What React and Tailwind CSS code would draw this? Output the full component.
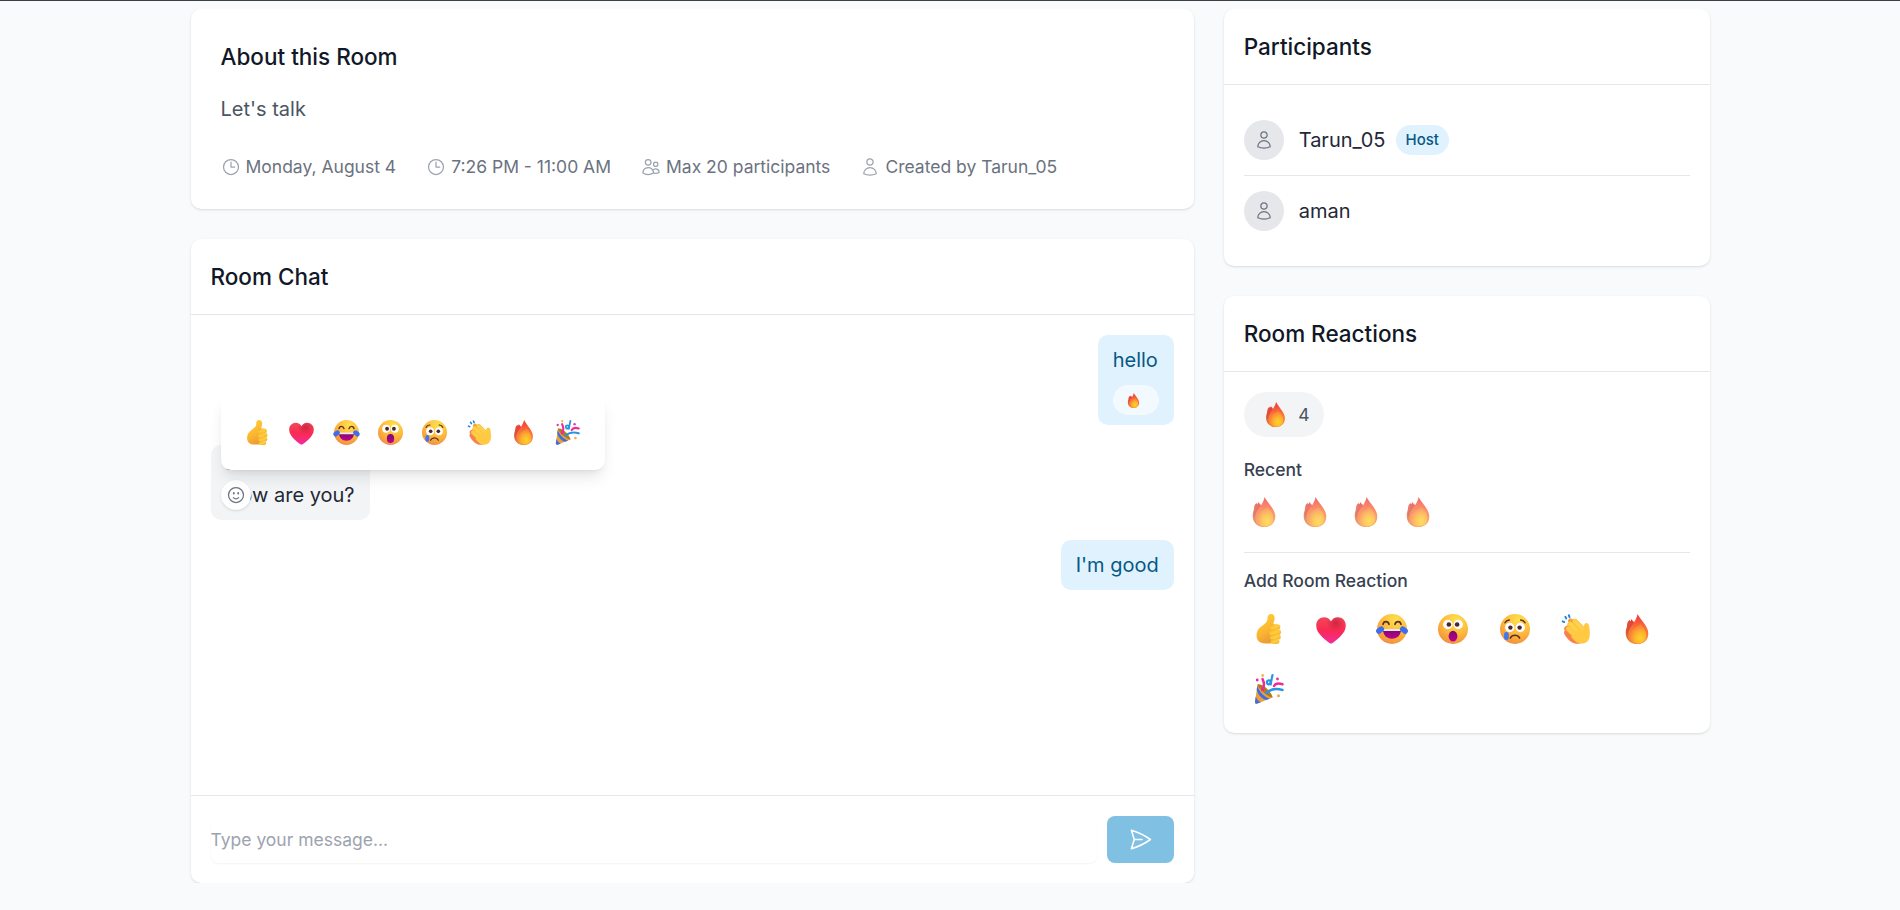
import React from "react";
import {
  HiOutlineClock,
  HiOutlineFaceSmile,
  HiOutlinePaperAirplane,
  HiOutlineUser,
  HiOutlineUsers,
} from "react-icons/hi2";

function Gradients() {
  return (
    <svg className="absolute h-0 w-0" aria-hidden="true">
      <defs>
        <radialGradient id="face" cx="0.62" cy="0.2" r="0.95">
          <stop offset="0" stopColor="#ffe04d" />
          <stop offset="0.5" stopColor="#fdb93c" />
          <stop offset="0.8" stopColor="#f4983d" />
          <stop offset="1" stopColor="#e86a80" />
        </radialGradient>
        <linearGradient id="hand" x1="0.2" y1="0" x2="0.6" y2="1">
          <stop offset="0" stopColor="#ffd233" />
          <stop offset="0.6" stopColor="#fbb531" />
          <stop offset="1" stopColor="#e99a35" />
        </linearGradient>
        <linearGradient id="finger" x1="0" y1="0" x2="1" y2="1">
          <stop offset="0" stopColor="#f2a92e" />
          <stop offset="0.5" stopColor="#ffcf3a" />
          <stop offset="1" stopColor="#f3a93a" />
        </linearGradient>
        <linearGradient id="heart" x1="0.5" y1="0" x2="0.45" y2="1">
          <stop offset="0" stopColor="#f2485a" />
          <stop offset="0.5" stopColor="#f92a52" />
          <stop offset="1" stopColor="#f22ba0" />
        </linearGradient>
        <radialGradient id="heartShade" cx="0.66" cy="0.22" r="0.32">
          <stop offset="0" stopColor="#c81f3e" stopOpacity="0.8" />
          <stop offset="1" stopColor="#c81f3e" stopOpacity="0" />
        </radialGradient>
        <linearGradient id="mouth" x1="0" y1="0" x2="0" y2="1">
          <stop offset="0" stopColor="#7a0a6e" />
          <stop offset="1" stopColor="#c0008f" />
        </linearGradient>
        <linearGradient id="flameBack" x1="0.6" y1="0" x2="0.3" y2="1">
          <stop offset="0" stopColor="#f5383b" />
          <stop offset="0.5" stopColor="#e0563a" />
          <stop offset="1" stopColor="#e07a3c" />
        </linearGradient>
        <linearGradient id="flameFront" x1="0.55" y1="0" x2="0.5" y2="1">
          <stop offset="0" stopColor="#f2363c" />
          <stop offset="0.45" stopColor="#fb6f38" />
          <stop offset="1" stopColor="#fb8f36" />
        </linearGradient>
        <radialGradient id="flameCore" cx="0.62" cy="0.75" r="0.7">
          <stop offset="0" stopColor="#ffd42a" />
          <stop offset="0.5" stopColor="#fdb02e" />
          <stop offset="1" stopColor="#f9773a" />
        </radialGradient>
      </defs>
    </svg>
  );
}

function Thumb() {
  return (
    <>
      <path
        d="M13.500 4.500C13.300 1.500 15 0 17 0c2.300 0 3.800 1.800 3.600 4.500-.2 2.200-1.100 4-1.200 6L21 28.700c-3 .7-6.500.8-9.500.8C6 29.500 2.500 26.500 2.500 21.500c0-4.500 2-7 5-9.300C10.500 10 13.600 8 13.500 4.500Z"
        fill="url(#hand)"
      />
      <rect x="16" y="10.300" width="10.300" height="5.600" rx="2.800" fill="url(#finger)" />
      <rect x="15.300" y="15.300" width="11.700" height="5.700" rx="2.800" fill="url(#finger)" />
      <rect x="15.800" y="20.400" width="11" height="5.400" rx="2.700" fill="url(#finger)" />
      <rect x="16.500" y="25.100" width="9" height="4.900" rx="2.400" fill="url(#finger)" />
    </>
  );
}

const heartPath =
  "M15 7.500C13.500 4.800 11.200 3.300 8.300 3.300 3.700 3.300.2 6.800.2 11.500c0 4.500 2.500 8 6 11.500 2.500 2.500 5 4.400 7.300 6 1 .7 2 .7 3 0 2.300-1.600 4.800-3.500 7.300-6 3.500-3.500 6-7 6-11.500 0-4.700-3.500-8.200-8.100-8.200-2.900 0-5.200 1.500-6.700 4.200Z";

function Heart() {
  return (
    <>
      <path d={heartPath} fill="url(#heart)" />
      <path d={heartPath} fill="url(#heartShade)" />
    </>
  );
}

function Joy() {
  return (
    <>
      <circle cx="15" cy="15" r="15" fill="url(#face)" />
      <path
        d="M6 10.300c.8-3.600 5-3.600 6 0M18 10.300c1-3.600 5.200-3.600 6 0"
        fill="none"
        stroke="#5b2f28"
        strokeWidth="1.700"
        strokeLinecap="round"
      />
      <path d="M6 15.500h18c0 5.500-3.600 9.300-9 9.300s-9-3.800-9-9.300Z" fill="url(#mouth)" />
      <path d="M6 15h18l-.2 2H6.200L6 15Z" fill="#f6e6f2" />
      <rect x="-1.300" y="13.300" width="8.600" height="5.600" rx="2.800" fill="#3f6df0" transform="rotate(-38 3 16)" />
      <rect x="22.700" y="13.300" width="8.600" height="5.600" rx="2.800" fill="#3f6df0" transform="rotate(38 27 16)" />
    </>
  );
}

function Wow() {
  return (
    <>
      <circle cx="15" cy="15" r="15" fill="url(#face)" />
      <circle cx="9.800" cy="10.500" r="4.700" fill="#fff" />
      <circle cx="20.200" cy="10.500" r="4.700" fill="#fff" />
      <circle cx="10.900" cy="10.500" r="2.300" fill="#4b2530" />
      <circle cx="19.100" cy="10.500" r="2.300" fill="#4b2530" />
      <ellipse cx="15" cy="22.200" rx="4.400" ry="5.400" fill="url(#mouth)" />
    </>
  );
}

function Sad() {
  return (
    <>
      <circle cx="15" cy="15" r="15" fill="url(#face)" />
      <path
        d="M5 8.800C5.800 7 7.500 6.200 9.300 6M20.700 6c1.800.2 3.500 1 4.300 2.800M10.300 24.200c2-3.800 7.400-3.800 9.400 0"
        fill="none"
        stroke="#5b2f28"
        strokeWidth="1.500"
        strokeLinecap="round"
      />
      <circle cx="9.700" cy="13.500" r="4.700" fill="#fff" />
      <circle cx="20.300" cy="13.500" r="4.700" fill="#fff" />
      <circle cx="10.400" cy="13.600" r="2.200" fill="#4b2530" />
      <circle cx="19.600" cy="13.600" r="2.200" fill="#4b2530" />
      <rect x="4.100" y="18" width="4.600" height="8" rx="2.300" fill="#3f76f2" />
    </>
  );
}

function Clap() {
  return (
    <>
      <path
        d="M5 12c-2 1-2.500 3-1.200 4.600-1 1.200-1 2.600-.2 3.900C6 24.500 9.500 28.500 14 29.600c3 .6 7 .2 8-2.600L10 10Z"
        fill="#f9804c"
      />
      <path d="M9.500 6.800 17 14" stroke="#f3a33a" strokeWidth="5" strokeLinecap="round" />
      <g fill="none" strokeLinecap="round">
        <path d="m14 7.800 8 8.200" stroke="#eda238" strokeWidth="5.800" />
        <path d="m14 7.600 8 8.200" stroke="#ffd148" strokeWidth="5" />
        <path d="m9.500 10.500 9 9" stroke="#eda238" strokeWidth="5.800" />
        <path d="m9.500 10.300 9 9" stroke="#ffd148" strokeWidth="5" />
        <path d="m7.300 15 8.700 8.500" stroke="#eda238" strokeWidth="5.600" />
        <path d="m7.400 14.800 8.700 8.500" stroke="#ffcd45" strokeWidth="4.800" />
      </g>
      <path
        d="M22.500 16c.5-2.500.2-4.500 1-5.800 1.400-2 4-1.200 4.500 1.300.6 3 .9 6.500.8 9.500-.2 5-3.300 8.600-8.300 8.600-3 0-5.500-1.300-7.500-3.600l-3-3.300 7-7Z"
        fill="#ffc942"
      />
      <path d="m7.800 1.200.7 1.900M4.300 2.700l1 1.700M1.700 7.300l1.600.8" stroke="#2384e6" strokeWidth="1.900" fill="none" strokeLinecap="round" />
    </>
  );
}

function Fire() {
  return (
    <>
      <path
        d="M9.400 5.400C10.200 6 10.900 6.500 11.500 7.400L24 24c-2 4-5 6-9 6C8.500 30 3.700 25.500 3.700 19c0-2.500.5-4.200 1-5.800.4-1.500.2-2.600.6-4C5.800 7.500 7 6.400 7.900 6c.3.500.6.800.8 1.200.3-.6.500-1.100.7-1.800Z"
        fill="url(#flameBack)"
      />
      <path d="M9.400 5.400C10.500 10 5.500 13 5.300 19.500" stroke="#c24a3a" strokeWidth="0.700" fill="none" />
      <path
        d="M15.700 0c1 2.500 3.500 5.300 5.800 8.600C24.300 12.500 26.300 15.500 26.300 19.500 26.300 26 21.500 30 15.700 30 10 30 6.300 26.300 6.300 21c0-4.500 2.200-7.500 4-10C12.200 8.200 14.600 4.500 15.700 0Z"
        fill="url(#flameFront)"
      />
      <path
        d="M18.300 9.500C20.500 12.500 24.500 16 24.500 21.500c0 4.700-3.500 7.900-8.200 7.900-4.800 0-8.300-3-8.300-7.700 0-4 2.200-6 4.700-7.900 2.100-1.500 4.600-2.500 5.600-4.300Z"
        fill="url(#flameCore)"
      />
    </>
  );
}

function Party() {
  return (
    <>
      <path d="M3.500 10.500 1 28c-.2 1.300.5 2 1.800 1.700L18.500 23.500C17 17 10 10 3.500 10.500Z" fill="#e8a03c" />
      <path d="M2.700 15.800C3.500 20 8 25.500 12.500 26l3.400-1.400C10.500 23.500 5 17.500 3.300 11.800ZM1.700 22.500C2.500 25 4.500 27.600 7 28.300l-3.600 1.300C1.800 29.800.9 29.300 1 28Z" fill="#3f6de0" />
      <path d="M3.500 10.500C6 9.500 10 12 13 15.300s6 6.500 5.500 8.200c-3.500.2-14.500-9-15-13Z" fill="#b57722" />
      <path d="M8.300 16C10.500 12.500 10.300 8.500 8.500 5M20 12c1.500-2.700 5-3 8.500-1.800" stroke="#ec2b98" strokeWidth="2.500" fill="none" strokeLinecap="round" />
      <path d="M12.500 19c4-4 9-5.200 16-3" stroke="#2b95e0" strokeWidth="2.500" fill="none" strokeLinecap="round" />
      <path d="M18.500 1c-.8 3.500-1.300 6-1.800 9.500M16.800 7.500c-2.500-2.500-5.300.3-3.300 2.300 1.500 1.200 3.100-.3 3.300-2.300Z" stroke="#2b95e0" strokeWidth="2.200" fill="none" strokeLinecap="round" />
      <circle cx="3.200" cy="6" r="1.400" fill="#e9309a" />
      <circle cx="23.500" cy="5" r="1.400" fill="#e9309a" />
      <circle cx="8.700" cy="1.500" r="1.400" fill="#f3bb4a" />
      <circle cx="24.500" cy="21.700" r="1.500" fill="#f0a850" />
    </>
  );
}

const reactions = [Thumb, Heart, Joy, Wow, Sad, Clap, Fire, Party];

function Emoji({ art: Art, className }) {
  return (
    <svg viewBox="0 0 30 30" className={`shrink-0 overflow-visible ${className}`}>
      <Art />
    </svg>
  );
}

function Card({ className = "", children }) {
  return <section className={`rounded-[10px] bg-white shadow ${className}`}>{children}</section>;
}

function CardHeader({ children }) {
  return (
    <header className="border-b border-[#e5e7eb] p-5">
      <h2 className="text-[22.5px] leading-[35px] font-medium text-[#111827]">{children}</h2>
    </header>
  );
}

function Meta({ icon: Icon, children }) {
  return (
    <div className="flex items-center gap-[5px]">
      <Icon className="size-5 text-[#9ca3af]" />
      <span>{children}</span>
    </div>
  );
}

function Participant({ name, host }) {
  return (
    <li className="flex items-center py-[15px]">
      <div className="flex size-10 items-center justify-center rounded-full bg-[#e5e7eb]">
        <HiOutlineUser className="size-5 text-[#6b7280]" />
      </div>
      <span className="ml-[15px] text-[20px] leading-[30px] text-[#1f2937]">{name}</span>
      {host && (
        <span className="ml-2.5 rounded-full bg-[#e0f2fe] px-2.5 py-[5px] text-[15px] leading-5 font-medium text-[#075985]">
          Host
        </span>
      )}
    </li>
  );
}

export default function App() {
  return (
    <div className="min-h-[910px] border-t border-[#3f3f46] bg-[#f9fafb] pt-2 font-[Inter,sans-serif]">
      <Gradients />
      <main className="ml-[190.5px] flex h-[874px] w-[1519.5px] gap-[30px] [overflow-y:clip]">
        <div className="flex w-[1003.2px] flex-col gap-[30px]">
          <Card className="p-[30px]">
            <h2 className="text-[22.5px] leading-[35px] font-medium text-[#111827]">About this Room</h2>
            <p className="mt-5 text-[20px] leading-[30px] text-[#4b5563]">Let's talk</p>
            <div className="mt-[30px] flex gap-[30px] text-[17.5px] leading-[25px] text-[#6b7280]">
              <Meta icon={HiOutlineClock}>Monday, August 4</Meta>
              <Meta icon={HiOutlineClock}>7:26 PM - 11:00 AM</Meta>
              <Meta icon={HiOutlineUsers}>Max 20 participants</Meta>
              <Meta icon={HiOutlineUser}>Created by Tarun_05</Meta>
            </div>
          </Card>

          <Card>
            <CardHeader>Room Chat</CardHeader>
            <div className="flex h-[480px] flex-col gap-5 p-5 text-[20px] leading-[30px]">
              <div className="self-end rounded-[10px] bg-[#e0f2fe] px-[15px] py-2.5 text-[#075985]">
                <div>hello</div>
                <div className="mt-2.5 flex h-[30px] w-[46px] items-center rounded-full bg-white/60 pl-[13px]">
                  <Emoji art={Fire} className="size-[15px]" />
                </div>
              </div>

              <div className="relative self-start rounded-[10px] bg-[#f3f4f6] px-[15px] py-2.5 text-[#1f2937]">
                <div className="mb-[5px] text-[15px] leading-5 font-medium text-[#9ca3af]">aman</div>
                <div>How are you?</div>
                <button className="absolute bottom-2.5 left-2.5 flex size-[30px] items-center justify-center rounded-full bg-white text-[#6b7280] shadow">
                  <HiOutlineFaceSmile className="size-5" />
                </button>
                <div className="absolute bottom-[50px] left-2.5 flex h-[76px] w-[384px] items-center rounded-[10px] bg-white px-[15px] shadow-lg">
                  {reactions.map((art, i) => (
                    <div key={i} className="flex w-[44.3px] shrink-0 justify-center">
                      <Emoji art={art} className="size-[25px]" />
                    </div>
                  ))}
                </div>
              </div>

              <div className="self-end rounded-[10px] bg-[#e0f2fe] px-[15px] py-2.5 text-[#075985]">I'm good</div>
            </div>
            <form className="flex gap-2.5 border-t border-[#e5e7eb] p-5">
              <input
                className="h-[47px] min-w-0 flex-1 rounded-[8px] text-[17.5px] shadow-xs placeholder:text-[#9ca3af]"
                placeholder="Type your message..."
              />
              <button
                type="button"
                className="flex h-[47px] w-[67px] items-center justify-center rounded-[8px] bg-[#80c1e3] text-white"
              >
                <HiOutlinePaperAirplane className="size-[25px]" />
              </button>
            </form>
          </Card>
        </div>

        <aside className="flex w-[486.3px] flex-col gap-[30px]">
          <Card>
            <CardHeader>Participants</CardHeader>
            <ul className="divide-y divide-[#e5e7eb] p-5">
              <Participant name="Tarun_05" host />
              <Participant name="aman" />
            </ul>
          </Card>

          <Card className="h-[437px]">
            <CardHeader>Room Reactions</CardHeader>
            <div className="px-5 pt-5 text-[17.5px] leading-[25px]">
              <div className="flex h-[45px] w-20 items-center rounded-full bg-[#f3f4f6] pl-[19.5px] text-[#4b5563]">
                <Emoji art={Fire} className="size-[25px]" />
                <span className="ml-[10px]">4</span>
              </div>
              <h3 className="mt-5 font-medium text-[#374151]">Recent</h3>
              <div className="mt-[15px] flex gap-[21.3px] pl-[5px] opacity-75">
                {[0, 1, 2, 3].map((i) => (
                  <Emoji key={i} art={Fire} className="size-[30px]" />
                ))}
              </div>
              <div className="mt-[25px] border-t border-[#e5e7eb] pt-[15px]">
                <h3 className="font-medium text-[#374151]">Add Room Reaction</h3>
                <div className="mt-5 -ml-[5px] flex flex-wrap gap-y-[30px] pt-[0.5px]">
                  {reactions.map((art, i) => (
                    <div key={i} className="flex w-[61.3px] justify-center">
                      <Emoji art={art} className="size-[30px]" />
                    </div>
                  ))}
                </div>
              </div>
            </div>
          </Card>
        </aside>
      </main>
    </div>
  );
}
